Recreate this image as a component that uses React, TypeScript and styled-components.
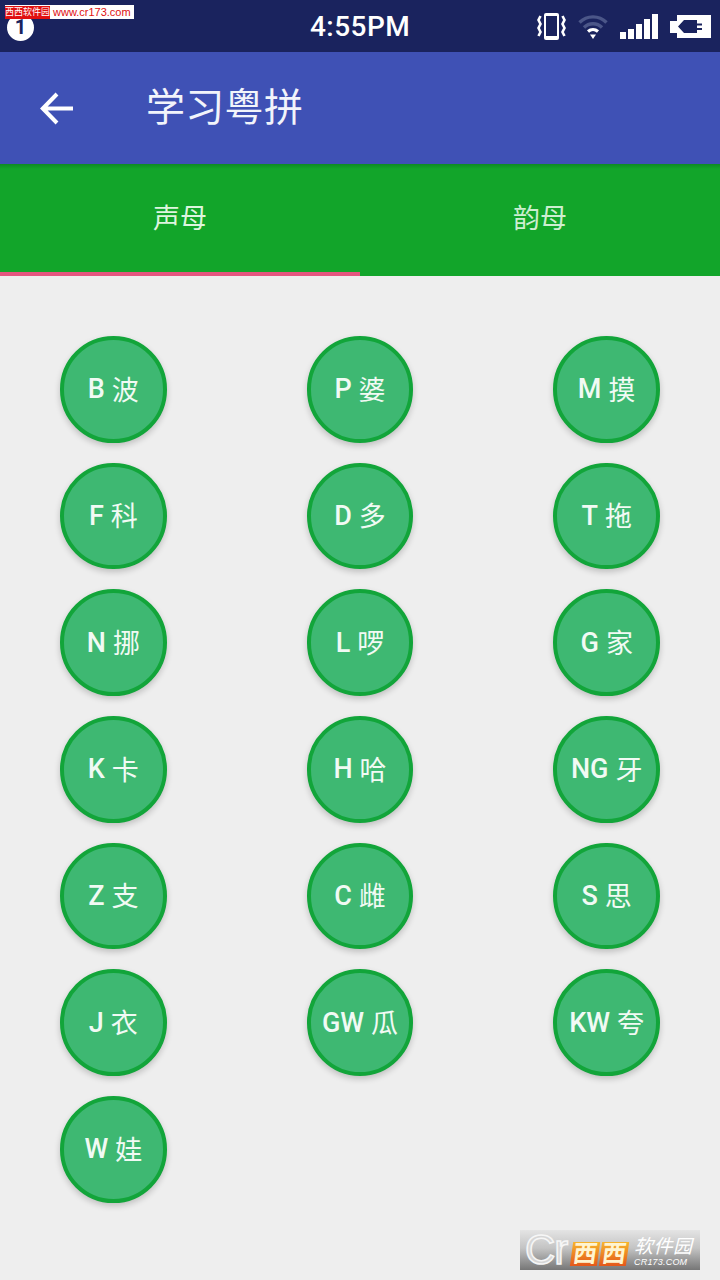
import React from "react";
import styled, { createGlobalStyle } from "styled-components";

const GlobalStyle = createGlobalStyle`
  html, body {
    margin: 0;
    padding: 0;
    background: #eeeeee;
  }
  * {
    box-sizing: border-box;
  }
`;

const Screen = styled.div`
  position: relative;
  width: 720px;
  height: 1280px;
  overflow: hidden;
  background: #eeeeee;
  font-family: Roboto, "Noto Sans CJK SC", sans-serif;
`;

const StatusBar = styled.div`
  position: relative;
  height: 52px;
  background: #1a235e;
  color: #ffffff;
  display: flex;
  align-items: center;
  justify-content: space-between;
  padding: 2px 0 0 7px;
`;

const NoticeBadge = styled.div`
  width: 27px;
  height: 27px;
  border-radius: 50%;
  background: #ffffff;
  color: #1a235e;
  font-size: 20px;
  font-weight: 700;
  display: flex;
  align-items: center;
  justify-content: center;
`;

const Clock = styled.div`
  position: absolute;
  left: 310px;
  top: 9px;
  font-size: 28px;
  line-height: 36px;
  font-weight: 500;
  letter-spacing: 0.45px;
`;

const StatusIcons = styled.div`
  display: flex;
  align-items: center;
  gap: 12px;
  padding: 0 9px 2px 0;
`;

const AppBar = styled.header`
  height: 112px;
  background: #3f51b5;
  color: #ffffff;
  display: flex;
  align-items: center;
  padding-left: 40px;
  gap: 73px;
`;

const BackIcon = styled.svg`
  width: 33px;
  height: 33px;
  flex: none;
`;

const Title = styled.h1`
  margin: 0;
  font-size: 39px;
  font-weight: 400;
  letter-spacing: 0.3px;
  line-height: 1;
  color: #f2f4fb;
`;

const TabBar = styled.nav`
  height: 112px;
  background: linear-gradient(#0e8a24, #12a52a 5px);
  display: flex;
`;

const Tab = styled.div<{ $active?: boolean }>`
  flex: 1;
  display: flex;
  align-items: center;
  justify-content: center;
  padding-bottom: 3px;
  font-size: 27px;
  color: ${({ $active }) => ($active ? "#ddf5df" : "#cdeed0")};
  border-bottom: 4px solid ${({ $active }) => ($active ? "#e4557f" : "transparent")};
`;

const KeyGrid = styled.main`
  display: grid;
  grid-template-columns: repeat(3, 106.67px);
  justify-content: space-between;
  row-gap: 20px;
  padding: 60px 60px 0;
`;

const KeyButton = styled.div`
  width: 106.67px;
  height: 106.67px;
  border-radius: 50%;
  background: #3eb872;
  border: 4px solid #12a53a;
  box-shadow: 0 3px 6px rgba(0, 0, 0, 0.2);
  color: #f1faf4;
  display: flex;
  align-items: center;
  justify-content: center;
  gap: 7px;
  font-size: 27px;
  white-space: nowrap;
`;

const Latin = styled.span`
  font-weight: 500;
`;

const Han = styled.span`
  margin-bottom: 2px;
`;

const TopWatermark = styled.div`
  position: absolute;
  left: 5px;
  top: 5px;
  width: 129px;
  height: 14px;
  background: #ffffff;
  display: flex;
  align-items: center;
  gap: 3px;
  white-space: nowrap;
`;

const WatermarkName = styled.span`
  background: #e01010;
  color: #ffffff;
  font-size: 9px;
  line-height: 13px;
  width: 45px;
`;

const WatermarkUrl = styled.span`
  color: #e01010;
  font-size: 11px;
  font-family: "Liberation Sans", sans-serif;
`;

const LogoWatermark = styled.div`
  position: absolute;
  left: 520px;
  top: 1230px;
  width: 180px;
  height: 40px;
  background: linear-gradient(#e4e4e4, #c4c4c4 45%, #767676);
  display: flex;
  align-items: center;
  white-space: nowrap;
`;

const LogoCr = styled.span`
  width: 50px;
  padding-left: 5px;
  font-family: "Liberation Sans", sans-serif;
  font-size: 42px;
  line-height: 40px;
  color: #d6d6d6;
  -webkit-text-stroke: 1.5px #f6f6f6;
  letter-spacing: -1px;
`;

const LogoBrand = styled.span`
  width: 60px;
  padding-top: 7px;
  display: flex;
  justify-content: center;
  gap: 2px;
  transform: skewX(-8deg);
`;

const BrandChar = styled.span`
  width: 27px;
  height: 24px;
  background: linear-gradient(#f7b52c, #e4571a);
  color: #fff4d0;
  font-size: 24px;
  line-height: 24px;
  font-weight: 700;
  text-align: center;
`;

const LogoSide = styled.div`
  display: flex;
  flex-direction: column;
  padding: 3px 0 0 4px;
  color: #ffffff;
  font-style: italic;
`;

const LogoCn = styled.span`
  font-size: 19px;
  line-height: 20px;
  letter-spacing: 0.5px;
`;

const LogoUrl = styled.span`
  font-family: "Liberation Sans", sans-serif;
  font-size: 9px;
  line-height: 10px;
  letter-spacing: 0.2px;
`;

const keys: [string, string][] = [
  ["B", "波"], ["P", "婆"], ["M", "摸"],
  ["F", "科"], ["D", "多"], ["T", "拖"],
  ["N", "挪"], ["L", "啰"], ["G", "家"],
  ["K", "卡"], ["H", "哈"], ["NG", "牙"],
  ["Z", "支"], ["C", "雌"], ["S", "思"],
  ["J", "衣"], ["GW", "瓜"], ["KW", "夸"],
  ["W", "娃"],
];

const VibrateIcon = () => (
  <svg width="29" height="27" viewBox="0 0 29 27" fill="none">
    <rect x="7" y="0" width="15" height="27" rx="2" fill="#fff" />
    <rect x="9" y="3" width="11" height="20" fill="#1a235e" />
    <path
      d="M3.5 3 L1.5 7 L3.5 11 L1.5 15 L3.5 19 L1.5 23 M25.5 3 L27.5 7 L25.5 11 L27.5 15 L25.5 19 L27.5 23"
      stroke="#fff"
      strokeWidth="2.6"
    />
  </svg>
);

const WifiIcon = () => (
  <svg width="30" height="25" viewBox="0 0 30 25" fill="none">
    <path d="M1.5 8.5 C9 1 21 1 28.5 8.5" stroke="#4b5688" strokeWidth="3.4" />
    <path d="M6 13.5 C11 8.5 19 8.5 24 13.5" stroke="#4b5688" strokeWidth="3.4" />
    <path d="M10 17.5 C13 15 17 15 20 17.5" stroke="#fff" strokeWidth="3.2" />
    <path d="M12 20.5 L18 20.5 L15 25 Z" fill="#fff" />
  </svg>
);

const SignalIcon = () => (
  <svg width="38" height="25" viewBox="0 0 38 25" fill="#fff">
    <rect x="0" y="18" width="6" height="7" />
    <rect x="8" y="15" width="6" height="10" />
    <rect x="16" y="10" width="6" height="15" />
    <rect x="24" y="5" width="6" height="20" />
    <rect x="32" y="0" width="6" height="25" />
  </svg>
);

const BatteryIcon = () => (
  <svg width="41" height="23" viewBox="0 0 41 23">
    <path
      fill="#fff"
      fillRule="evenodd"
      d="M7 0 H41 V23 H7 V18 H0 V6 H7 Z M8 11.5 L14 5 H27 V8.5 H32 V10.5 H27 V13 H32 V15 H27 V18 H14 Z"
    />
  </svg>
);

export default function App() {
  return (
    <Screen>
      <GlobalStyle />
      <StatusBar>
        <NoticeBadge>1</NoticeBadge>
        <Clock>4:55PM</Clock>
        <StatusIcons>
          <VibrateIcon />
          <WifiIcon />
          <SignalIcon />
          <BatteryIcon />
        </StatusIcons>
      </StatusBar>
      <AppBar>
        <BackIcon viewBox="0 0 33 33" fill="none" stroke="#ffffff" strokeWidth="4">
          <path d="M33 16.5 H3 M17 2 L2.8 16.5 L17 31" />
        </BackIcon>
        <Title>学习粤拼</Title>
      </AppBar>
      <TabBar>
        <Tab $active>声母</Tab>
        <Tab>韵母</Tab>
      </TabBar>
      <KeyGrid>
        {keys.map(([latin, han]) => (
          <KeyButton key={latin}>
            <Latin>{latin}</Latin>
            <Han>{han}</Han>
          </KeyButton>
        ))}
      </KeyGrid>
      <TopWatermark>
        <WatermarkName>西西软件园</WatermarkName>
        <WatermarkUrl>www.cr173.com</WatermarkUrl>
      </TopWatermark>
      <LogoWatermark>
        <LogoCr>Cr</LogoCr>
        <LogoBrand>
          <BrandChar>西</BrandChar>
          <BrandChar>西</BrandChar>
        </LogoBrand>
        <LogoSide>
          <LogoCn>软件园</LogoCn>
          <LogoUrl>CR173.COM</LogoUrl>
        </LogoSide>
      </LogoWatermark>
    </Screen>
  );
}
